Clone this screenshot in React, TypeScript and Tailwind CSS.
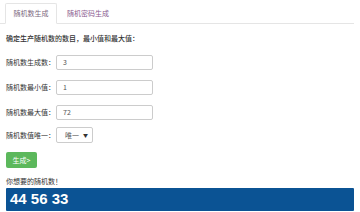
import React from "react";

const font = { fontFamily: '"Noto Sans CJK SC", "Noto Sans", sans-serif' };

function Row({ label, value }: { label: string; value: string }) {
  return (
    <div className="flex items-center h-[15px]">
      <span className="w-[50px] text-[7px] text-[#333]">{label}</span>
      <div className="w-[97px] h-[15px] border border-[#ccc] rounded-[2px] flex items-center pl-[6px] text-[7px] text-[#555] bg-white">
        {value}
      </div>
    </div>
  );
}

export default function App() {
  return (
    <div className="w-[360px] h-[212px] bg-white overflow-hidden" style={font}>
      <div className="flex h-[24px] border-b border-[#e5e5e5] pt-[3px] mr-[6px]">
        <div className="ml-[5px] w-[52px] h-[21px] border border-[#e5e5e5] border-b-white rounded-t-[2px] -mb-px bg-white flex items-center justify-center text-[7px] text-[#7d6a80]">
          随机数生成
        </div>
        <div className="ml-[10px] flex items-center text-[7px] text-[#8a5c8f]">随机密码生成</div>
      </div>
      <div className="pl-[6px]">
        <div className="mt-[10px] text-[7px] text-[#333] font-medium leading-[9px]">
          确定生产随机数的数目，最小值和最大值：
        </div>
        <div className="mt-[12px] flex flex-col gap-[10px]">
          <Row label="随机数生成数：" value="3" />
          <Row label="随机数最小值：" value="1" />
          <Row label="随机数最大值：" value="72" />
        </div>
        <div className="mt-[7px] flex items-center">
          <span className="w-[50px] text-[7px] text-[#333]">随机数值唯一：</span>
          <div className="w-[37px] h-[16px] border border-[#ccc] rounded-[2px] flex items-center pl-[8px] pr-[4px] text-[7px] text-[#555] bg-white justify-between">
            <span>唯一</span>
            <span className="text-[5px] text-[#333]">▼</span>
          </div>
        </div>
        <div className="mt-[9px] w-[31px] h-[16px] bg-[#5cb85c] rounded-[2px] flex items-center justify-center text-[7px] text-white">
          生成&gt;
        </div>
        <div className="mt-[9px] text-[7px] text-[#333] leading-[9px]">你想要的随机数！</div>
        <div className="mt-[2px] w-[348px] h-[23px] bg-[#0b5394] rounded-[1px] flex items-center pl-[4px] text-white font-bold text-[15px]" style={{ fontFamily: '"Liberation Sans", Arial, sans-serif' }}>
          44 56 33
        </div>
      </div>
    </div>
  );
}
